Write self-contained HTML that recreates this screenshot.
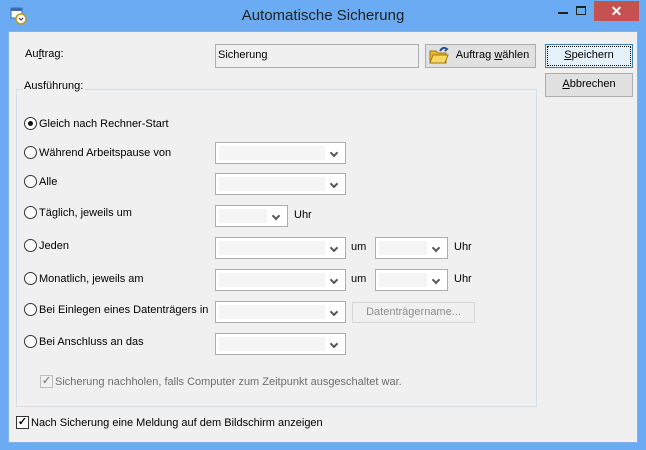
<!DOCTYPE html>
<html><head><meta charset="utf-8"><style>
*{box-sizing:border-box;margin:0;padding:0}
body{width:646px;height:450px;background:#6aabf3;position:relative;overflow:hidden;font-family:"Liberation Sans",Tahoma,sans-serif;font-size:11px;color:#000}
.a{position:absolute}
.client{left:8px;top:31px;width:630px;height:412px;background:#f0f0f0;border:1px solid #7fb3ec}
.title{left:0;top:7px;width:646px;text-align:center;font-size:15px;color:#222}
.close{left:594px;top:1px;width:45px;height:20px;background:#c75050;color:#fff;text-align:center;font-size:14px;font-weight:bold;line-height:20px}
.btn{background:#e1e1e1;border:1px solid #adadad;text-align:center;line-height:21px}
.combo{background:#fff;border:1px solid #abadb3;height:22px;width:131px}
.combo::before{content:"";position:absolute;left:3px;top:3px;right:20px;bottom:3px;background:#f5f5f5}
.combo::after{content:"";position:absolute;right:8px;top:7px;width:4px;height:4px;border-right:2px solid #555;border-bottom:2px solid #555;transform:rotate(45deg)}
.radio{width:13px;height:13px;border:1px solid #333;border-radius:50%;background:#fff}
.lbl{line-height:14px}
.grp{left:16px;top:89px;width:521px;height:318px;border:1px solid #d5dfe5}
.cb{width:13px;height:13px;border:1px solid #333;background:#fff;font-size:11px;line-height:11px;text-align:center;font-weight:bold}
u{text-decoration:underline}
</style></head><body>
<div class="a client"></div>
<div class="a title">Automatische Sicherung</div>
<svg class="a" style="left:10px;top:7px" width="18" height="18" viewBox="0 0 18 18"><rect x="1" y="1" width="11" height="10" fill="#fff" stroke="#3e6bb0"/><rect x="1" y="1" width="11" height="3" fill="#3e6bb0"/><circle cx="11" cy="12" r="5" fill="#fff" stroke="#c8961a" stroke-width="1.5"/><path d="M9 11l2 2 2-2" stroke="#333" fill="none"/></svg>
<div class="a" style="left:558px;top:12px;width:10px;height:2px;background:#222"></div>
<div class="a" style="left:576px;top:6px;width:10px;height:9px;border:1px solid #222;border-top-width:2px"></div>
<div class="a close">✕</div>

<div class="a lbl" style="left:25px;top:47px">Au<u>f</u>trag:</div>
<div class="a" style="left:215px;top:44px;width:204px;height:24px;border:1px solid #abadb3;background:#f0f0f0;padding:4px 2px">Sicherung</div>
<div class="a btn" style="left:425px;top:44px;width:111px;height:24px;padding-left:24px">Auftrag <u>w</u>ählen</div>
<svg class="a" style="left:429px;top:46px" width="20" height="19" viewBox="0 0 20 19"><path d="M1 5h6l2 2h8v10H1z" fill="#e8b828" stroke="#a07810"/><path d="M1 17l3-8h15l-3 8z" fill="#f8d860" stroke="#a07810"/><path d="M11 5q3-5 7-2l-2 2" stroke="#2a4f9a" stroke-width="2" fill="none"/></svg>
<div class="a btn" style="left:545px;top:44px;width:88px;height:24px;border-color:#3c7fb1;background:#e5f1fb;outline:1px dotted #000;outline-offset:-3px"><u>S</u>peichern</div>
<div class="a btn" style="left:545px;top:73px;width:88px;height:24px"><u>A</u>bbrechen</div>

<div class="a grp"></div>
<div class="a lbl" style="left:22px;top:79px;background:#f0f0f0;padding:0 2px">Ausführung:</div>

<div class="a radio" style="left:24px;top:117px"></div><div class="a" style="left:28px;top:121px;width:5px;height:5px;border-radius:50%;background:#111"></div>
<div class="a lbl" style="left:39px;top:117px">Gleich nach Rechner-Start</div>
<div class="a radio" style="left:24px;top:146px"></div><div class="a lbl" style="left:39px;top:146px">Während Arbeitspause von</div>
<div class="a combo" style="left:215px;top:142px"></div>
<div class="a radio" style="left:24px;top:175px"></div><div class="a lbl" style="left:39px;top:175px">Alle</div>
<div class="a combo" style="left:215px;top:173px"></div>
<div class="a radio" style="left:24px;top:206px"></div><div class="a lbl" style="left:39px;top:206px">Täglich, jeweils um</div>
<div class="a combo" style="left:215px;top:205px;width:73px"></div><div class="a lbl" style="left:294px;top:208px">Uhr</div>
<div class="a radio" style="left:24px;top:239px"></div><div class="a lbl" style="left:39px;top:239px">Jeden</div>
<div class="a combo" style="left:215px;top:237px"></div><div class="a lbl" style="left:351px;top:240px">um</div>
<div class="a combo" style="left:375px;top:237px;width:73px"></div><div class="a lbl" style="left:454px;top:240px">Uhr</div>
<div class="a radio" style="left:24px;top:272px"></div><div class="a lbl" style="left:39px;top:272px">Monatlich, jeweils am</div>
<div class="a combo" style="left:215px;top:269px"></div><div class="a lbl" style="left:351px;top:272px">um</div>
<div class="a combo" style="left:375px;top:269px;width:73px"></div><div class="a lbl" style="left:454px;top:272px">Uhr</div>
<div class="a radio" style="left:24px;top:303px"></div><div class="a lbl" style="left:39px;top:303px">Bei Einlegen eines Datenträgers in</div>
<div class="a combo" style="left:215px;top:301px"></div>
<div class="a btn" style="left:352px;top:302px;width:123px;height:21px;line-height:19px;color:#8d8d8d;background:#f0f0f0;border-color:#d5d5d5">Datenträgername...</div>
<div class="a radio" style="left:24px;top:335px"></div><div class="a lbl" style="left:39px;top:335px">Bei Anschluss an das</div>
<div class="a combo" style="left:215px;top:333px"></div>

<div class="a cb" style="left:40px;top:375px;border-color:#bcbcbc;background:#f0f0f0;color:#8d8d8d">✓</div>
<div class="a lbl" style="left:55px;top:375px;color:#6d6d6d">Sicherung nachholen, falls Computer zum Zeitpunkt ausgeschaltet war.</div>
<div class="a cb" style="left:16px;top:416px">✓</div>
<div class="a lbl" style="left:31px;top:416px">Nach Sicherung eine Meldung auf dem Bildschirm anzeigen</div>
</body></html>
